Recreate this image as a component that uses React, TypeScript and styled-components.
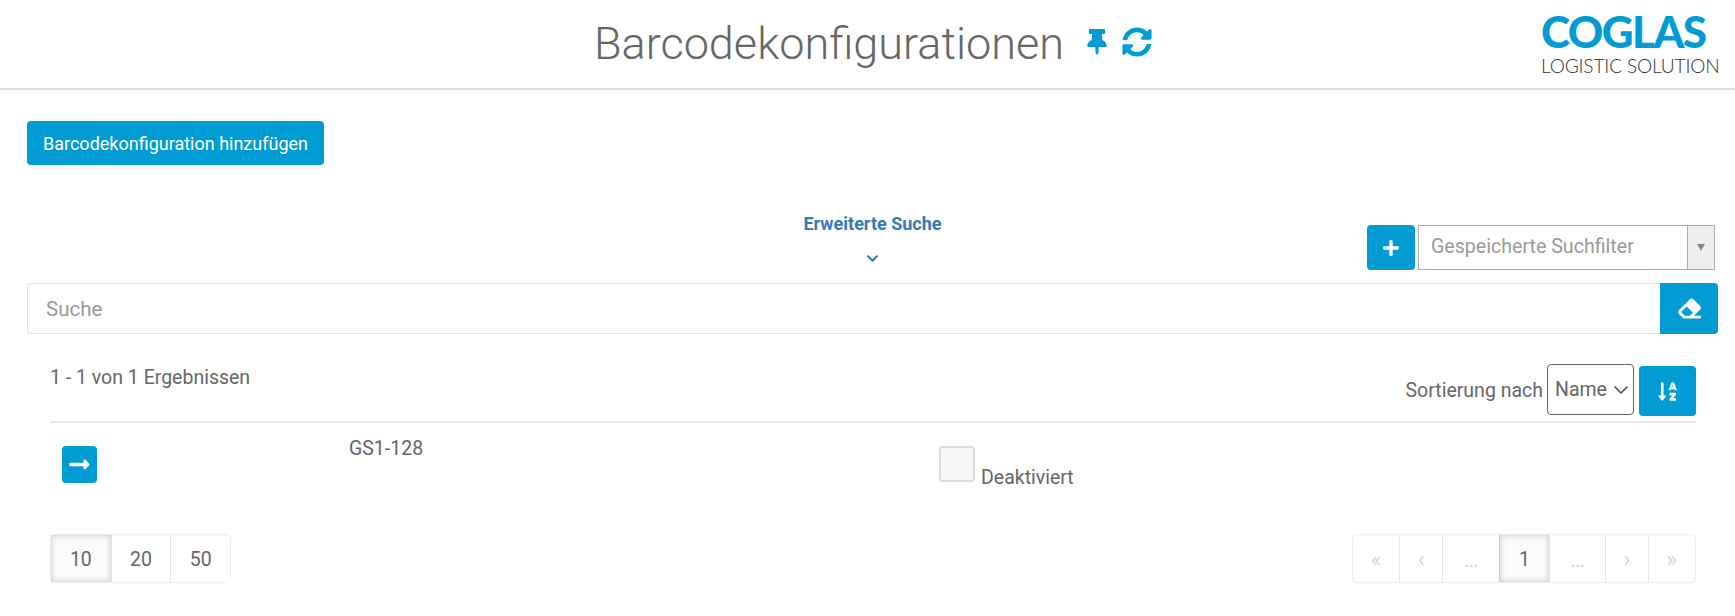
import { createGlobalStyle } from 'styled-components';
import styled from 'styled-components';
import {
  FaThumbtack,
  FaSyncAlt,
  FaPlus,
  FaEraser,
  FaSortAlphaDown,
  FaLongArrowAltRight,
  FaChevronDown,
} from 'react-icons/fa';
import { FiChevronDown } from 'react-icons/fi';

const BLUE = '#019cd3';
const TEXT = '#666';

const GlobalStyle = createGlobalStyle`
  html, body {
    margin: 0;
    padding: 0;
    background: #fff;
    font-family: Roboto, "Liberation Sans", sans-serif;
    font-size: 19.5px;
    color: ${TEXT};
  }
  * { box-sizing: border-box; }
`;

const Page = styled.div`
  width: 1735px;
  height: 616px;
  overflow: hidden;
`;

const Header = styled.header`
  height: 90px;
  border-bottom: 2px solid #dedede;
  display: grid;
  grid-template-columns: 1fr auto 1fr;
  align-items: start;
`;

const TitleRow = styled.div`
  grid-column: 2;
  display: flex;
  align-items: center;
  height: 88px;
  padding-left: 11px;
`;

const Title = styled.h1`
  margin: 0;
  font-weight: 300;
  font-size: 45px;
  line-height: 88px;
  color: ${TEXT};
`;

const TitleIcons = styled.div`
  display: flex;
  align-items: center;
  gap: 12px;
  margin-left: 20px;
  color: ${BLUE};
  margin-top: -4px;
`;

const Logo = styled.div`
  justify-self: end;
  width: 178px;
  margin: 9px 16px 0 0;
  display: flex;
  flex-direction: column;
  align-items: stretch;
`;

const LogoMark = styled.span`
  font-family: Lato, sans-serif;
  font-weight: 900;
  font-size: 44px;
  line-height: 44px;
  letter-spacing: -1.6px;
  color: ${BLUE};
  white-space: nowrap;
`;

const LogoSub = styled.span`
  font-family: Lato, sans-serif;
  font-weight: 300;
  font-size: 19.2px;
  line-height: 22px;
  margin-top: 2px;
  letter-spacing: -0.2px;
  color: #333;
  white-space: nowrap;
`;

const Content = styled.main`
  padding: 31px 17px 0 27px;
`;

const PrimaryButton = styled.button<{ $w?: number; $h?: number }>`
  display: inline-flex;
  align-items: center;
  justify-content: center;
  width: ${(p) => (p.$w ? `${p.$w}px` : 'auto')};
  height: ${(p) => (p.$h ? `${p.$h}px` : 'auto')};
  padding: 0;
  border: none;
  border-radius: 4px;
  background: ${BLUE};
  color: #fff;
  font-family: inherit;
  font-size: 18px;
  font-weight: 400;
  flex: none;
`;

const FilterRow = styled.div`
  display: grid;
  grid-template-columns: 1fr auto 1fr;
  height: 60px;
  margin-top: 60px;
  align-items: start;
`;

const AdvancedSearch = styled.div`
  grid-column: 2;
  display: flex;
  flex-direction: column;
  align-items: center;
  color: #337ab7;
  font-size: 18px;
  font-weight: 700;
  line-height: 20px;
  margin-top: -11px;
  margin-left: 0;
  gap: 18px;
`;

const SavedFilters = styled.div`
  grid-column: 3;
  justify-self: end;
  display: flex;
  gap: 3px;
  margin: 0 3px 0 0;
`;

const Combo = styled.div`
  width: 297px;
  height: 45px;
  border: 1px solid #aaa;
  display: flex;
`;

const ComboText = styled.div`
  flex: 1;
  padding-left: 12px;
  line-height: 41px;
  font-size: 19.6px;
  color: #999;
`;

const ComboArrow = styled.div`
  width: 27px;
  background: #eee;
  border-left: 1px solid #aaa;
  display: flex;
  align-items: center;
  justify-content: center;

  &::after {
    content: '';
    border-left: 4px solid transparent;
    border-right: 4px solid transparent;
    border-top: 7px solid #888;
  }
`;

const SearchRow = styled.div`
  display: flex;
  height: 51px;
  margin-top: -2px;
`;

const SearchInput = styled.div`
  flex: 1;
  border: 1px solid #e3e3e3;
  border-right: none;
  border-radius: 4px 0 0 4px;
  padding-left: 18px;
  line-height: 50px;
  font-size: 20.5px;
  color: #999;
`;

const SearchClear = styled(PrimaryButton)`
  border-radius: 0 4px 4px 0;
`;

const ResultsPanel = styled.section`
  padding: 0 22px 0 23px;
`;

const ResultsHead = styled.div`
  display: flex;
  justify-content: space-between;
  height: 89px;
  border-bottom: 2px solid #e9e9e9;
`;

const ResultCount = styled.div`
  margin-top: 33px;
  line-height: 22px;
`;

const SortControls = styled.div`
  display: flex;
  align-items: flex-start;
  margin-top: 30px;
`;

const SortLabel = styled.span`
  line-height: 24px;
  margin-top: 15px;
  margin-right: 4px;
`;

const SortSelect = styled.div`
  width: 87px;
  height: 51px;
  border: 1px solid #666;
  border-radius: 4px;
  display: flex;
  align-items: center;
  gap: 2px;
  padding-left: 7px;
  color: ${TEXT};
  font-size: 19.5px;
`;

const SortButton = styled(PrimaryButton)`
  margin-left: 5px;
  margin-top: 2px;
`;

const ResultRow = styled.div`
  display: grid;
  grid-template-columns: 299px 590px 1fr;
  height: 111px;
`;

const OpenCell = styled.div`
  padding: 23px 0 0 12px;
`;

const NameCell = styled.div`
  padding-top: 15px;
  line-height: 22px;
`;

const StatusCell = styled.label`
  display: flex;
  align-items: flex-end;
  align-self: start;
  margin-top: 23px;
  gap: 6px;
`;

const CheckBox = styled.span`
  width: 36px;
  height: 36px;
  border: 2px solid #dcdcdc;
  border-radius: 4px;
  background: #f7f7f7;
`;

const StatusText = styled.span`
  line-height: 22px;
  margin-bottom: -7px;
`;

const Footer = styled.div`
  display: flex;
  justify-content: space-between;
`;

const PagerGroup = styled.div`
  display: flex;
  height: 49px;
  border: 1px solid #ebebeb;
  border-radius: 5px;
`;

const PagerCell = styled.div<{ $w: number; $active?: boolean; $muted?: boolean }>`
  width: ${(p) => p.$w}px;
  display: flex;
  align-items: center;
  justify-content: center;
  padding-top: 2px;
  border-left: 1px solid #e6e6e6;
  color: ${(p) => (p.$muted ? '#d4d4d4' : TEXT)};
  font-size: ${(p) => (p.$muted ? '22px' : '19.5px')};
  ${(p) =>
    p.$active &&
    `
    background: #fbfbfb;
    box-shadow: inset 0 0 6px rgba(0, 0, 0, 0.22);
    border-left-color: #ccc;
  `}

  &:first-child {
    border-left: none;
  }
`;

const sizes = ['10', '20', '50'];

const pages = [
  { label: '«', w: 46, muted: true },
  { label: '‹', w: 43, muted: true },
  { label: '…', w: 57, muted: true },
  { label: '1', w: 50, active: true },
  { label: '…', w: 56, muted: true },
  { label: '›', w: 43, muted: true },
  { label: '»', w: 47, muted: true },
];

export default function App() {
  return (
    <Page>
      <GlobalStyle />
      <Header>
        <TitleRow>
          <Title>Barcodekonfigurationen</Title>
          <TitleIcons>
            <FaThumbtack size={26} />
            <FaSyncAlt size={30} />
          </TitleIcons>
        </TitleRow>
        <Logo>
          <LogoMark>COGLAS</LogoMark>
          <LogoSub>LOGISTIC SOLUTION</LogoSub>
        </Logo>
      </Header>

      <Content>
        <PrimaryButton $w={297} $h={44}>Barcodekonfiguration hinzufügen</PrimaryButton>

        <FilterRow>
          <AdvancedSearch>
            Erweiterte Suche
            <FaChevronDown size={13} />
          </AdvancedSearch>
          <SavedFilters>
            <PrimaryButton $w={48} $h={45}>
              <FaPlus size={18} />
            </PrimaryButton>
            <Combo>
              <ComboText>Gespeicherte Suchfilter</ComboText>
              <ComboArrow />
            </Combo>
          </SavedFilters>
        </FilterRow>

        <SearchRow>
          <SearchInput>Suche</SearchInput>
          <SearchClear $w={58} $h={51}>
            <FaEraser size={23} />
          </SearchClear>
        </SearchRow>

        <ResultsPanel>
          <ResultsHead>
            <ResultCount>1 - 1 von 1 Ergebnissen</ResultCount>
            <SortControls>
              <SortLabel>Sortierung nach</SortLabel>
              <SortSelect>
                Name
                <FiChevronDown size={24} color="#555" strokeWidth={1.7} />
              </SortSelect>
              <SortButton $w={57} $h={50}>
                <FaSortAlphaDown size={21} />
              </SortButton>
            </SortControls>
          </ResultsHead>

          <ResultRow>
            <OpenCell>
              <PrimaryButton $w={35} $h={37}>
                <FaLongArrowAltRight size={23} />
              </PrimaryButton>
            </OpenCell>
            <NameCell>GS1-128</NameCell>
            <StatusCell>
              <CheckBox />
              <StatusText>Deaktiviert</StatusText>
            </StatusCell>
          </ResultRow>

          <Footer>
            <PagerGroup>
              {sizes.map((s, i) => (
                <PagerCell key={s} $w={59.7} $active={i === 0}>
                  {s}
                </PagerCell>
              ))}
            </PagerGroup>
            <PagerGroup>
              {pages.map((p, i) => (
                <PagerCell key={i} $w={p.w} $active={p.active} $muted={p.muted}>
                  {p.label}
                </PagerCell>
              ))}
            </PagerGroup>
          </Footer>
        </ResultsPanel>
      </Content>
    </Page>
  );
}
